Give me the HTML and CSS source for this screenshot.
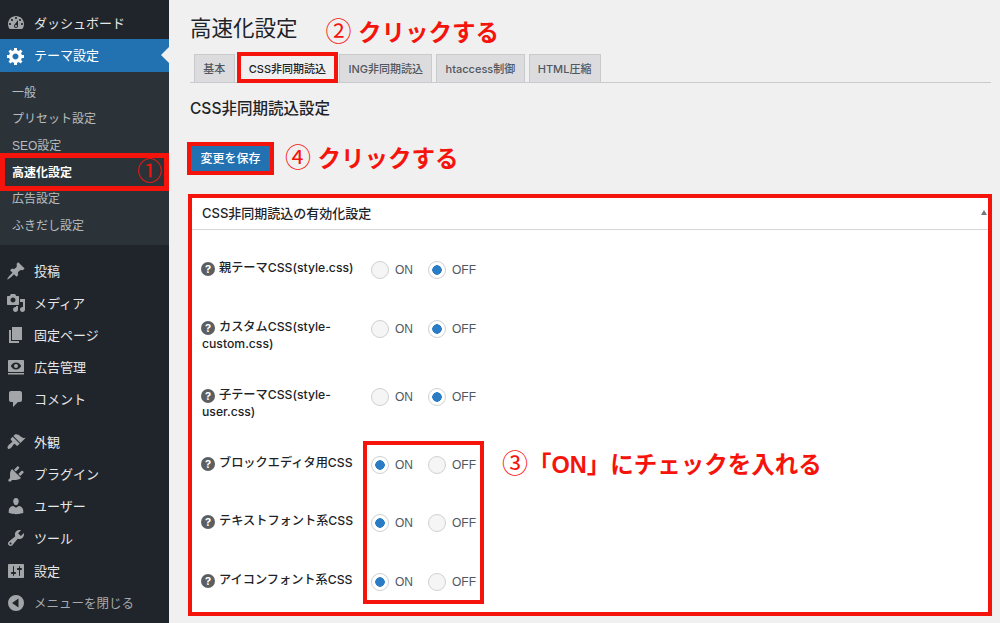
FILE: index.html
```html
<!DOCTYPE html>
<html lang="ja">
<head>
  <meta charset="UTF-8" />
  <title>高速化設定</title>
  <link rel="stylesheet" href="styles.css">
</head>
<body>
  <div class="pagina">
    <nav class="menu">
      <a class="menu-item">
        <svg class="icone" viewBox="0 0 20 20"><path d="M3.76 16h12.48c1.1-1.37 1.76-3.11 1.76-5 0-4.42-3.58-8-8-8s-8 3.58-8 8c0 1.89.66 3.63 1.76 5zM10 4c.55 0 1 .45 1 1s-.45 1-1 1-1-.45-1-1 .45-1 1-1zM6 6c.55 0 1 .45 1 1s-.45 1-1 1-1-.45-1-1 .45-1 1-1zm8 0c.55 0 1 .45 1 1s-.45 1-1 1-1-.45-1-1 .45-1 1-1zm-5.37 5.55L12 7v6c0 1.1-.9 2-2 2s-2-.9-2-2c0-.57.24-1.08.63-1.45zM4 10c.55 0 1 .45 1 1s-.45 1-1 1-1-.45-1-1 .45-1 1-1zm12 0c.55 0 1 .45 1 1s-.45 1-1 1-1-.45-1-1 .45-1 1-1zm-5 3c0-.55-.45-1-1-1s-1 .45-1 1 .45 1 1 1 1-.45 1-1z"/></svg>
        <span>ダッシュボード</span>
      </a>
      <a class="menu-item ativo">
        <svg class="icone" viewBox="0 0 20 20"><path d="M18 12h-2.18c-.17.7-.44 1.35-.81 1.93l1.54 1.54-2.1 2.1-1.54-1.54c-.58.36-1.23.63-1.91.79V19H8v-2.18c-.68-.16-1.33-.43-1.91-.79l-1.54 1.54-2.12-2.12 1.54-1.54c-.36-.58-.63-1.23-.79-1.91H1V9.03h2.17c.16-.7.44-1.35.8-1.94L2.43 5.55l2.1-2.1 1.54 1.54c.58-.37 1.24-.64 1.93-.81V2h3v2.18c.68.16 1.33.43 1.91.79l1.54-1.54 2.12 2.12-1.54 1.54c.36.59.64 1.24.8 1.94H18V12zm-8.5 1.5c1.66 0 3-1.34 3-3s-1.34-3-3-3-3 1.34-3 3 1.34 3 3 3z"/></svg>
        <span>テーマ設定</span>
      </a>
      <div class="submenu">
        <a class="sub-item">一般</a>
        <a class="sub-item">プリセット設定</a>
        <a class="sub-item">SEO設定</a>
        <a class="sub-item atual">高速化設定<span class="passo">①</span></a>
        <a class="sub-item">広告設定</a>
        <a class="sub-item">ふきだし設定</a>
      </div>
      <a class="menu-item inicio-grupo">
        <svg class="icone" viewBox="0 0 20 20"><path d="M10.44 3.02l1.82-1.82 6.36 6.35-1.83 1.82c-1.05-.68-2.48-.57-3.41.36l-.75.75c-.92.93-1.04 2.35-.35 3.41l-1.83 1.82-2.41-2.41-2.8 2.79c-.42.42-3.38 2.71-3.8 2.29s1.86-3.39 2.28-3.81l2.79-2.79L4.1 9.36l1.83-1.82c1.05.69 2.48.57 3.4-.36l.75-.75c.93-.92 1.05-2.35.36-3.41z"/></svg>
        <span>投稿</span>
      </a>
      <a class="menu-item">
        <svg class="icone" viewBox="0 0 20 20"><path d="M13 11V4c0-.55-.45-1-1-1h-1.67L9 1H5L3.67 3H2c-.55 0-1 .45-1 1v7c0 .55.45 1 1 1h10c.55 0 1-.45 1-1zM7 4.5c1.38 0 2.5 1.12 2.5 2.5S8.38 9.5 7 9.5 4.5 8.38 4.5 7 5.62 4.5 7 4.5zM14 6h5v10.5c0 1.38-1.12 2.5-2.5 2.5S14 17.88 14 16.5s1.12-2.5 2.5-2.5c.17 0 .34.02.5.05V9h-3V6zm-4 8.05V13h2v3.5c0 1.38-1.12 2.5-2.5 2.5S7 17.88 7 16.5 8.12 14 9.5 14c.17 0 .34.02.5.05z"/></svg>
        <span>メディア</span>
      </a>
      <a class="menu-item">
        <svg class="icone" viewBox="0 0 20 20"><path d="M6 15V2h10v13H6zm-1 1h8v2H3V5h2v11z"/></svg>
        <span>固定ページ</span>
      </a>
      <a class="menu-item">
        <svg class="icone" viewBox="0 0 20 20"><path fill-rule="evenodd" d="M3 3h14c.55 0 1 .45 1 1v10c0 .55-.45 1-1 1H3c-.55 0-1-.45-1-1V4c0-.55.45-1 1-1zm7 2.5c-2.4 0-4.3 1.6-5.2 3.5.9 1.9 2.8 3.5 5.2 3.5s4.3-1.6 5.2-3.5c-.9-1.9-2.8-3.5-5.2-3.5zM10 7a2 2 0 1 1 0 4 2 2 0 0 1 0-4zM2 16h16v1.5H2z"/></svg>
        <span>広告管理</span>
      </a>
      <a class="menu-item">
        <svg class="icone" viewBox="0 0 20 20"><path d="M5 2h9c1.1 0 2 .9 2 2v7c0 1.1-.9 2-2 2h-2l-5 5v-5H5c-1.1 0-2-.9-2-2V4c0-1.1.9-2 2-2z"/></svg>
        <span>コメント</span>
      </a>
      <a class="menu-item novo-grupo">
        <svg class="icone" viewBox="0 0 20 20"><path d="M14.48 11.06L7.41 3.99l1.5-1.5c.5-.56 2.3-.47 3.51.32 1.21.8 1.43 1.28 2.91 2.1 1.18.64 2.45 1.26 4.45.85zm-.71.71L6.7 4.7 4.93 6.47c-.39.39-.39 1.02 0 1.41l1.06 1.06c.39.39.39 1.03 0 1.42-.6.6-1.43 1.11-2.21 1.69-.35.26-.7.53-1.01.84-1.04 1.04-1.7 2.6-.9 3.6.1.1.22.2.35.28.94.6 2.02-.1 3.13-1.2.32-.32.59-.67.84-1.02.58-.78 1.09-1.61 1.69-2.21.39-.39 1.03-.39 1.42 0l1.06 1.06c.39.39 1.02.39 1.41 0z"/></svg>
        <span>外観</span>
      </a>
      <a class="menu-item">
        <svg class="icone" viewBox="0 0 20 20"><path d="M13.11 4.36L9.87 7.6 8 5.73l3.24-3.24c.35-.34 1.05-.2 1.56.32.52.51.66 1.21.31 1.55zm-8 1.77l.91-1.12 9.01 9.01-1.19.84c-.71.71-2.63 1.16-3.82 1.16H6.14L4.9 17.26c-.59.59-1.54.59-2.12 0-.59-.58-.59-1.53 0-2.12l1.24-1.24v-3.88c0-1.13.4-3.19 1.09-3.89zm7.26 3.97l3.24-3.24c.34-.35 1.04-.21 1.55.31.52.51.66 1.21.31 1.55l-3.24 3.25z"/></svg>
        <span>プラグイン</span>
      </a>
      <a class="menu-item">
        <svg class="icone" viewBox="0 0 20 20"><path d="M10 9.25c-2.27 0-2.73-3.44-2.73-3.44C7 4.02 7.82 2 9.97 2c2.16 0 2.98 2.02 2.71 3.81 0 0-.41 3.44-2.68 3.44zm0 2.57L12.72 10c2.39 0 4.52 2.33 4.52 4.53v2.49s-3.65 1.13-7.24 1.13c-3.65 0-7.24-1.13-7.24-1.13v-2.49c0-2.25 1.94-4.48 4.47-4.48z"/></svg>
        <span>ユーザー</span>
      </a>
      <a class="menu-item">
        <svg class="icone" viewBox="0 0 20 20"><path d="M16.68 9.77c-1.34 1.34-3.3 1.67-4.95.99l-5.41 6.52c-.99.99-2.59.99-3.58 0s-.99-2.59 0-3.57l6.52-5.42c-.68-1.65-.35-3.61.99-4.95 1.28-1.28 3.12-1.62 4.72-1.06l-2.89 2.89 2.82 2.82 2.86-2.87c.53 1.58.18 3.39-1.08 4.65zM3.81 16.21c.4.39 1.04.39 1.43 0 .4-.4.4-1.04 0-1.43-.39-.4-1.03-.4-1.43 0-.39.39-.39 1.03 0 1.43z"/></svg>
        <span>ツール</span>
      </a>
      <a class="menu-item config">
        <svg class="icone" viewBox="0 0 20 20"><path d="M18 16V4c0-.55-.45-1-1-1H3c-.55 0-1 .45-1 1v12c0 .55.45 1 1 1h14c.55 0 1-.45 1-1zM8 11h1c.55 0 1 .45 1 1s-.45 1-1 1H8v1.5c0 .28-.22.5-.5.5s-.5-.22-.5-.5V13H6c-.55 0-1-.45-1-1s.45-1 1-1h1V5.5c0-.28.22-.5.5-.5s.5.22.5.5V11zm5-2h-1c-.55 0-1-.45-1-1s.45-1 1-1h1V5.5c0-.28.22-.5.5-.5s.5.22.5.5V7h1c.55 0 1 .45 1 1s-.45 1-1 1h-1v5.5c0 .28-.22.5-.5.5s-.5-.22-.5-.5V9z"/></svg>
        <span>設定</span>
      </a>
      <a class="menu-item fechar">
        <svg class="icone" viewBox="0 0 20 20"><path fill-rule="evenodd" d="M10 2a8 8 0 1 0 0 16 8 8 0 0 0 0-16zm2.5 3.5v9L6 10z"/></svg>
        <span>メニューを閉じる</span>
      </a>
    </nav>

    <main class="conteudo">
      <div class="titulo">
        <h1>高速化設定</h1>
        <span class="nota"><span class="num">②</span> クリックする</span>
      </div>

      <div class="abas">
        <a class="aba">基本</a>
        <a class="aba ativa">CSS非同期読込</a>
        <a class="aba">ING非同期読込</a>
        <a class="aba">htaccess制御</a>
        <a class="aba">HTML圧縮</a>
      </div>

      <h2>CSS非同期読込設定</h2>

      <div class="salvar">
        <button type="button" class="btn-salvar">変更を保存</button>
        <span class="nota"><span class="num">④</span> クリックする</span>
      </div>

      <section class="painel">
        <div class="painel-topo">
          <span>CSS非同期読込の有効化設定</span>
          <i class="seta"></i>
        </div>
        <div class="linhas">
          <div class="linha">
            <div class="rotulo"><i class="ajuda">?</i><span>親テーマCSS(style.css)</span></div>
            <div class="opcoes">
              <label><input type="radio" name="r1" />ON</label>
              <label><input type="radio" name="r1" checked />OFF</label>
            </div>
          </div>
          <div class="linha">
            <div class="rotulo"><i class="ajuda">?</i><span>カスタムCSS(style-</span><br><span>custom.css)</span></div>
            <div class="opcoes">
              <label><input type="radio" name="r2" />ON</label>
              <label><input type="radio" name="r2" checked />OFF</label>
            </div>
          </div>
          <div class="linha">
            <div class="rotulo"><i class="ajuda">?</i><span>子テーマCSS(style-</span><br><span>user.css)</span></div>
            <div class="opcoes">
              <label><input type="radio" name="r3" />ON</label>
              <label><input type="radio" name="r3" checked />OFF</label>
            </div>
          </div>
          <div class="linha">
            <div class="rotulo"><i class="ajuda">?</i><span>ブロックエディタ用CSS</span></div>
            <div class="opcoes">
              <label><input type="radio" name="r4" checked />ON</label>
              <label><input type="radio" name="r4" />OFF</label>
            </div>
          </div>
          <div class="linha">
            <div class="rotulo"><i class="ajuda">?</i><span>テキストフォント系CSS</span></div>
            <div class="opcoes">
              <label><input type="radio" name="r5" checked />ON</label>
              <label><input type="radio" name="r5" />OFF</label>
            </div>
          </div>
          <div class="linha">
            <div class="rotulo"><i class="ajuda">?</i><span>アイコンフォント系CSS</span></div>
            <div class="opcoes">
              <label><input type="radio" name="r6" checked />ON</label>
              <label><input type="radio" name="r6" />OFF</label>
            </div>
          </div>
        </div>
        <div class="caixa-radios"></div>
        <span class="nota nota-on"><span class="num">③</span>「ON」にチェックを入れる</span>
      </section>
    </main>
  </div>
</body>
</html>
```

FILE: styles.css
```css
:root {
  --fundo: #f0f0f1;
  --menu: #1f252b;
  --submenu: #2c3338;
  --azul: #2271b1;
  --vermelho: #f5140c;
  --icone: #a3a6a9;
  --linha: #d5d6d8;
}
* {
  box-sizing: border-box;
}
body {
  margin: 0;
  background-color: var(--fundo);
  font-family: "Liberation Sans", "Noto Sans CJK JP", sans-serif;
  color: #1d2327;
}
.pagina {
  display: flex;
  height: 623px;
  overflow: hidden;
}

/* menu lateral */
.menu {
  width: 169px;
  flex-shrink: 0;
  padding-top: 7px;
  background-color: var(--menu);
}
.menu-item {
  position: relative;
  display: flex;
  align-items: center;
  gap: 8px;
  height: 32px;
  padding-left: 6px;
  font-size: 13px;
  color: #e6e7e8;
}
.menu-item span {
  margin-top: -2px;
}
.icone {
  width: 20px;
  height: 20px;
  fill: var(--icone);
  flex-shrink: 0;
}
.menu-item.ativo {
  height: 33px;
  background-color: var(--azul);
  color: #fff;
}
.menu-item.ativo .icone {
  fill: #fff;
}
.menu-item.ativo::after {
  content: "";
  position: absolute;
  right: 0;
  top: 8px;
  border: 8px solid transparent;
  border-right-color: var(--fundo);
  border-left-width: 0;
}
.submenu {
  height: 173px;
  padding-top: 6px;
  background-color: var(--submenu);
}
.sub-item {
  position: relative;
  display: flex;
  align-items: center;
  height: 26.6px;
  padding-left: 12px;
  font-size: 12px;
  color: #b9bcbf;
}
.sub-item.atual {
  font-weight: 700;
  color: #fff;
}
.sub-item.atual::after {
  content: "";
  position: absolute;
  left: 0;
  right: 0;
  top: -5px;
  bottom: -7px;
  border: 5px solid var(--vermelho);
}
.passo {
  margin-left: auto;
  margin-right: 7px;
  font-size: 25px;
  font-weight: 400;
  line-height: 1;
  color: var(--vermelho);
}
.inicio-grupo {
  margin-top: 10px;
}
.novo-grupo {
  margin-top: 11px;
}
.config {
  margin-top: 1px;
}
.fechar {
  color: #a7aaad;
  font-size: 12.5px;
}

/* area principal */
.conteudo {
  flex: 1;
  padding: 0 9px 0 21px;
}
.titulo {
  display: flex;
  align-items: center;
  gap: 28px;
  height: 54px;
  padding-top: 4px;
}
h1 {
  margin: 0;
  font-size: 21.5px;
  font-weight: 400;
  line-height: 50px;
}
.nota {
  font-size: 23.5px;
  font-weight: 700;
  line-height: 30px;
  white-space: nowrap;
  color: var(--vermelho);
}
.num {
  font-size: 26px;
  font-weight: 400;
}
.titulo .nota {
  margin-top: 6px;
}
.abas {
  display: flex;
  gap: 4px;
  height: 29px;
  padding-left: 4px;
  border-bottom: 1px solid #c9cacc;
}
.aba {
  position: relative;
  display: flex;
  align-items: center;
  padding: 0 8.25px 2px;
  height: 28px;
  font-family: Inter, "Noto Sans CJK JP", sans-serif;
  font-size: 11px;
  font-weight: 500;
  color: #50575e;
  background-color: #dcdcde;
  border: 1px solid #c9cacc;
  border-bottom: none;
}
.aba.ativa {
  margin-left: 1px;
  color: #1d2327;
  background-color: var(--fundo);
}
.aba.ativa::after {
  content: "";
  position: absolute;
  left: -4px;
  right: -4px;
  top: -3px;
  bottom: -1px;
  border: 4px solid var(--vermelho);
}
h2 {
  margin: 0;
  height: 62px;
  padding-top: 16px;
  font-family: Inter, "Noto Sans CJK JP", sans-serif;
  font-size: 15.5px;
  font-weight: 500;
  line-height: 20px;
}
.salvar {
  display: flex;
  align-items: center;
  gap: 14px;
  height: 27px;
}
.btn-salvar {
  position: relative;
  width: 81px;
  height: 27px;
  padding: 0 0 2px;
  font-family: inherit;
  font-size: 12px;
  font-weight: 500;
  color: #fff;
  background-color: var(--azul);
  border: 1px solid #1c6099;
  border-radius: 2px;
}
.btn-salvar::after {
  content: "";
  position: absolute;
  left: -4px;
  right: -4px;
  top: -4px;
  bottom: -4px;
  border: 4px solid var(--vermelho);
}
.painel {
  position: relative;
  margin: 26px 3px 0 2px;
  height: 414px;
  background-color: #fff;
  outline: 4px solid var(--vermelho);
}
.painel-topo {
  display: flex;
  align-items: center;
  justify-content: space-between;
  height: 32px;
  padding: 0 1px 2px 10px;
  font-family: Inter, "Noto Sans CJK JP", sans-serif;
  font-size: 13px;
  font-weight: 500;
  border-bottom: 1px solid var(--linha);
}
.seta {
  width: 0;
  height: 0;
  border: 3px solid transparent;
  border-top: none;
  border-bottom: 5px solid #72777c;
}
.linhas {
  padding: 11px 0 0 10px;
}
.linha {
  display: flex;
  align-items: flex-start;
}
.rotulo {
  width: 169px;
  padding: 18px 10px 16px 0;
  font-family: Inter, "Noto Sans CJK JP", sans-serif;
  font-size: 12.2px;
  font-weight: 500;
  line-height: 17px;
}
.ajuda {
  display: inline-block;
  width: 14px;
  height: 14px;
  margin: 0 4px 0 -1px;
  border-radius: 50%;
  font-size: 11px;
  font-style: normal;
  font-weight: 700;
  line-height: 14px;
  text-align: center;
  vertical-align: -1px;
  color: #fff;
  background-color: #5c5f62;
}
.opcoes {
  display: flex;
  gap: 16px;
  padding: 20px 0 20.5px;
}
.opcoes label {
  display: flex;
  align-items: center;
  gap: 6px;
  width: 41px;
  height: 18px;
  font-size: 12px;
  color: #50575e;
}
.opcoes input {
  appearance: none;
  flex-shrink: 0;
  width: 18px;
  height: 18px;
  margin: 0;
  border: 1px solid #cfd0d2;
  border-radius: 50%;
  background-color: #f5f5f5;
}
.opcoes input:checked {
  background: radial-gradient(circle, #2a7cc4 0 4.5px, #fff 5px);
}
.caixa-radios {
  position: absolute;
  left: 171px;
  top: 243px;
  width: 121px;
  height: 163px;
  border: 4px solid var(--vermelho);
}
.nota-on {
  position: absolute;
  left: 310px;
  top: 251px;
}
```
